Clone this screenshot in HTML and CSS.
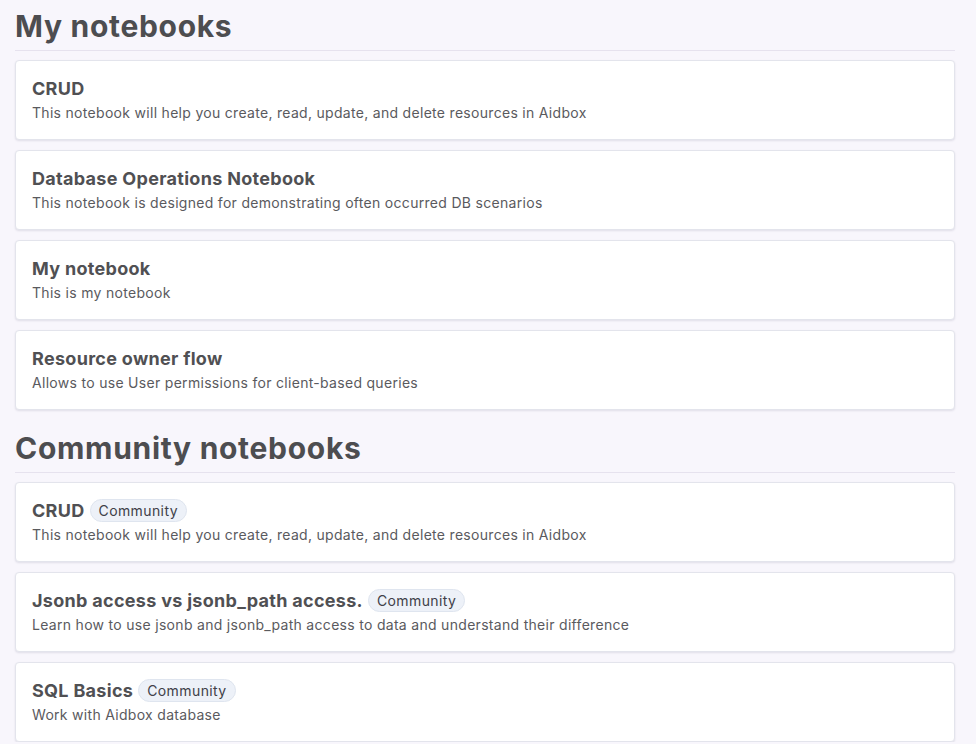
FILE: index.html
```html
<!DOCTYPE html>
<html>
<head>
<meta charset="utf-8">
<link rel="stylesheet" href="styles.css">
</head>
<body>
<main class="page">
  <section class="section">
    <h1 class="section-title">My notebooks</h1>
    <div class="cards">
      <a class="card"><div class="card-title">CRUD</div><div class="card-desc">This notebook will help you create, read, update, and delete resources in Aidbox</div></a>
      <a class="card"><div class="card-title">Database Operations Notebook</div><div class="card-desc">This notebook is designed for demonstrating often occurred DB scenarios</div></a>
      <a class="card"><div class="card-title">My notebook</div><div class="card-desc">This is my notebook</div></a>
      <a class="card"><div class="card-title">Resource owner flow</div><div class="card-desc">Allows to use User permissions for client-based queries</div></a>
    </div>
  </section>
  <section class="section">
    <h1 class="section-title">Community notebooks</h1>
    <div class="cards">
      <a class="card"><div class="card-title">CRUD <span class="badge">Community</span></div><div class="card-desc">This notebook will help you create, read, update, and delete resources in Aidbox</div></a>
      <a class="card"><div class="card-title">Jsonb access vs jsonb_path access. <span class="badge">Community</span></div><div class="card-desc">Learn how to use jsonb and jsonb_path access to data and understand their difference</div></a>
      <a class="card"><div class="card-title">SQL Basics <span class="badge">Community</span></div><div class="card-desc">Work with Aidbox database</div></a>
    </div>
  </section>
</main>
</body>
</html>
```
FILE: styles.css
```css
html, body {
  margin: 0;
  padding: 0;
  background: #f8f6fc;
}
body {
  font-family: Inter, "Noto Sans", sans-serif;
  color: #4f4f52;
}
.page {
  padding: 10px 21px 0 15px;
  display: flex;
  flex-direction: column;
  gap: 22px;
}
.section-title {
  margin: 0;
  height: 40px;
  line-height: 32px;
  font-size: 30px;
  font-weight: 700;
  letter-spacing: 0.7px;
  color: #4d4d50;
  border-bottom: 1px solid #e6e2ee;
  box-sizing: content-box;
}
.cards {
  margin-top: 9px;
  display: flex;
  flex-direction: column;
  gap: 10px;
}
.card {
  display: block;
  height: 80px;
  box-sizing: border-box;
  padding: 16px 16px 16px;
  background: #fff;
  border: 1px solid #e3e4ec;
  border-radius: 4px;
  box-shadow: 0 1px 2px rgba(60, 60, 90, 0.12);
}
.card-title {
  display: flex;
  align-items: center;
  gap: 5px;
  height: 22px;
  font-size: 18px;
  font-weight: 700;
  letter-spacing: 0.3px;
  color: #505053;
}
.badge {
  display: inline-flex;
  align-items: center;
  height: 23px;
  padding: 0 8px;
  box-sizing: border-box;
  border: 1px solid #dfe5ef;
  background: #edf1f8;
  border-radius: 12px;
  font-size: 14px;
  font-weight: 400;
  letter-spacing: 0.4px;
  color: #404048;
}
.card-desc {
  margin-top: 4px;
  line-height: 20px;
  font-size: 14px;
  letter-spacing: 0.3px;
  color: #5a5a5e;
}
```
